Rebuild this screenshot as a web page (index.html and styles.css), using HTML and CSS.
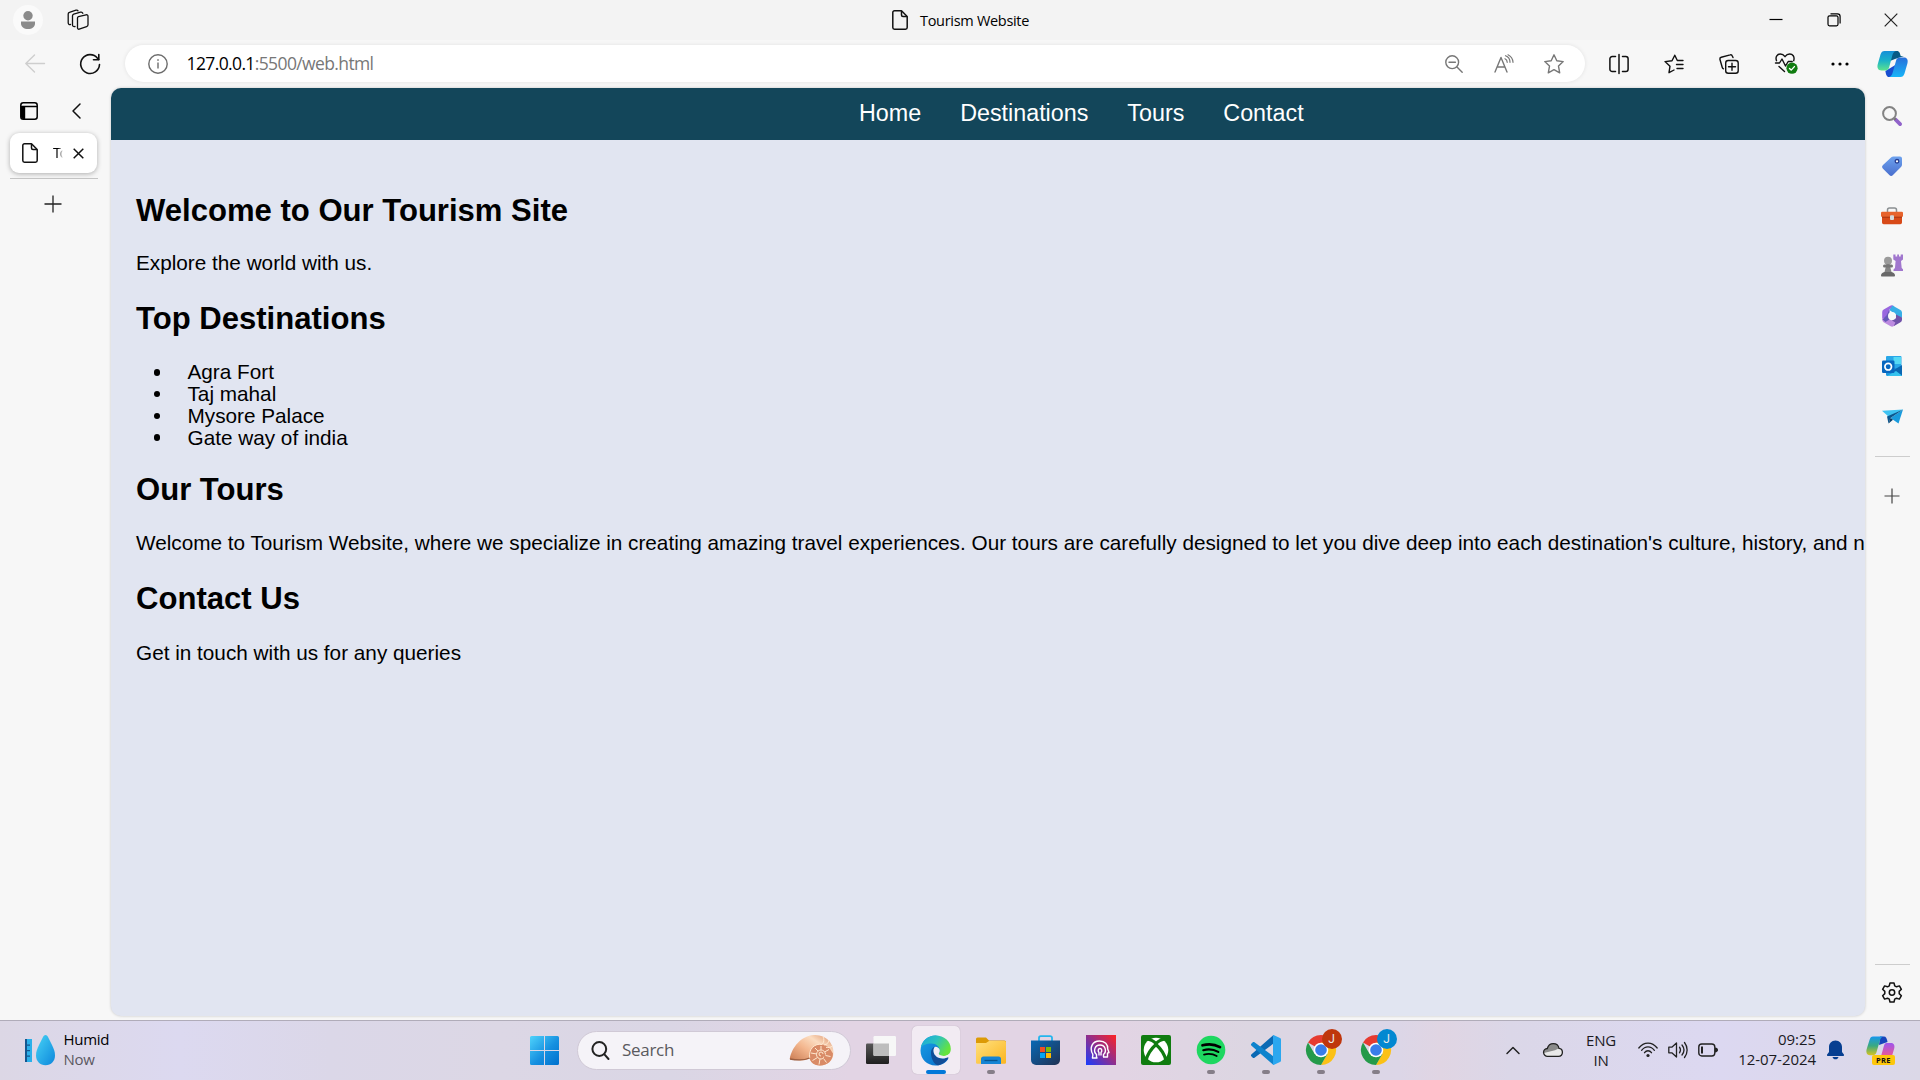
FILE: index.html
```html
<!DOCTYPE html>
<html lang="en">
<head>
<meta charset="utf-8">
<title>Tourism Website</title>
<link rel="stylesheet" href="styles.css">
</head>
<body>
<header class="titlebar">
  <div class="avatar"><svg width="16" height="18" viewBox="0 0 16 18" fill="#8b8b8b"><circle cx="8" cy="4.7" r="4.7"/><path d="M1 10.5h14v2.2c0 3-3 5.3-7 5.3s-7-2.300-7-5.300z"/></svg></div>
  <svg class="workspaces" width="22" height="22" viewBox="0 0 22 22" fill="none" stroke="#111" stroke-width="1.300" stroke-linejoin="round" stroke-linecap="round"><path d="M11.500 7.600l7.500-1.800a1.600 1.600 0 0 1 2 1.600v8.300a2 2 0 0 1-1.400 1.900l-7.400 2.600a1.300 1.300 0 0 1-1.700-1.200V9a1.500 1.500 0 0 1 1-1.400z"/><path d="M8 17.500c-1.600.3-2.500-.3-2.500-1.500V6.800c0-.8.500-1.400 1.200-1.700l6.800-1.900c1.200-.3 2 .3 2.300 1.100"/><path d="M3.500 15.500C2 15.800 1.200 15 1.200 13.800V5c0-.8.500-1.500 1.200-1.700L9 1.200c1-.3 1.700.1 2 .7"/></svg>
  <div class="window-title">
    <svg width="16" height="20" viewBox="0 0 16 20" fill="none" stroke="#111" stroke-width="1.500" stroke-linejoin="round"><path d="M2.500.8h7l5.700 5.700v11a1.700 1.700 0 0 1-1.700 1.700h-11a1.700 1.700 0 0 1-1.700-1.700v-15A1.700 1.700 0 0 1 2.500.8z"/><path d="M9.500 1v4a1.500 1.500 0 0 0 1.500 1.500h4"/></svg>
    <span>Tourism Website</span>
  </div>
  <div class="window-buttons">
    <svg width="14" height="14" viewBox="0 0 14 14"><path d="M.5 6.500h13" stroke="#000" stroke-width="1.200"/></svg>
    <svg width="14" height="14" viewBox="0 0 14 14" fill="none" stroke="#000" stroke-width="1.200"><rect x="1" y="2.800" width="10" height="10" rx="1.500"/><path d="M3.500.8h7a2.600 2.600 0 0 1 2.600 2.600v7"/></svg>
    <svg width="14" height="14" viewBox="0 0 14 14"><path d="M.7.7l12.600 12.600M13.300.7L.7 13.300" stroke="#222" stroke-width="1.200"/></svg>
  </div>
</header>

<div class="toolbar">
  <div class="nav-buttons">
    <svg width="20" height="20" viewBox="0 0 20 20" fill="none" stroke="#cecece" stroke-width="1.400" stroke-linecap="round" stroke-linejoin="round"><path d="M19.500 9.500H.8M9.500 1L.8 9.500l8.700 8.500"/></svg>
    <svg width="22" height="22" viewBox="0 0 22 22" fill="none" stroke="#111" stroke-width="1.600" stroke-linecap="round" stroke-linejoin="round"><path d="M20.500 11.500A9.400 9.400 0 1 1 18.500 5.200l1.200 1.300"/><path d="M19.800 1.500v5.300h-5.300"/></svg>
  </div>
  <div class="address">
    <svg width="20" height="20" viewBox="0 0 20 20" fill="none" stroke="#6c6c6c" stroke-width="1.400"><circle cx="10" cy="10" r="9.200"/><path d="M10 8.500v6"/><circle cx="10" cy="6" r=".5" fill="#6c6c6c" stroke-width=".8"/></svg>
    <span class="url"><b>127.0.0.1</b>:5500/web.html</span>
    <div class="address-tools">
      <svg width="18" height="18" viewBox="0 0 18 18" fill="none" stroke="#777" stroke-width="1.400" stroke-linecap="round"><circle cx="7.200" cy="7.200" r="6.400"/><path d="M12 12l5.200 5.200M4 7.200h6.400"/></svg>
      <svg width="20" height="20" viewBox="0 0 20 20" fill="none" stroke="#777" stroke-width="1.400" stroke-linecap="round" stroke-linejoin="round"><path d="M1 18L7 3.500 13 18M3.200 13h7.600"/><path d="M11.500 1.700c3 1 4.500 3.600 4.500 6.600M11 4.700c1.500.6 2.200 2 2.200 3.600M14 .8c3 1.500 4.800 4.500 5 7.500" stroke-width="1.200"/></svg>
      <svg width="20" height="20" viewBox="0 0 20 20" fill="none" stroke="#777" stroke-width="1.400" stroke-linejoin="round"><path d="M10 .8l2.800 5.900 6.400.9-4.700 4.500 1.200 6.700L10 15.600l-5.700 3.200 1.200-6.700L.8 7.600l6.400-.9z"/></svg>
    </div>
  </div>
  <div class="toolbar-actions">
    <svg width="20" height="20" viewBox="0 0 20 20" fill="none" stroke="#111" stroke-width="1.500" stroke-linecap="round"><path d="M10 .5v19M6.500 2.500H3.200a2.300 2.300 0 0 0-2.300 2.300v10.400a2.300 2.300 0 0 0 2.300 2.300h3.300M13.500 2.500h3.300a2.300 2.300 0 0 1 2.300 2.300v10.400a2.300 2.300 0 0 1-2.300 2.300h-3.300"/></svg>
    <svg width="20" height="20" viewBox="0 0 20 20" fill="none" stroke="#111" stroke-width="1.400" stroke-linecap="round" stroke-linejoin="round"><path d="M19 6.500h-5.700L10.800 1.200 8 6.700l-7 .9 5 4.600-1 6.500 5-2.700M12.500 10.500H19M13 14.500h6"/></svg>
    <svg width="20" height="20" viewBox="0 0 20 20" fill="none" stroke="#111" stroke-width="1.400" stroke-linecap="round" stroke-linejoin="round"><rect x="6.700" y="6.500" width="12.500" height="12.700" rx="2.500"/><path d="M13 9.300v7M9.500 12.800h7M14 3.500l-.7-1.500A1.700 1.700 0 0 0 11.200.9L2.200 3.200A1.800 1.800 0 0 0 .9 5.300l2.300 8c.2.700.6 1.200 1.300 1.500"/></svg>
    <svg width="24" height="24" viewBox="0 0 24 24" fill="none" stroke="#111" stroke-width="1.400" stroke-linecap="round" stroke-linejoin="round"><path d="M2.500 8.700C1 4.500 3.500 2 6.300 2c2 0 3.500 1 4.700 2.700C12.200 3 13.700 2 15.700 2c2.800 0 5.300 2.500 4 6.700M1.500 11h4L8 7l3.500 7 2.700-4.500h4M5 14.500l5.500 5"/><circle cx="18" cy="16.200" r="5.600" fill="#107c10" stroke="none"/><path d="M15.500 16.500l1.700 1.600 3.200-3.500" stroke="#fff"/></svg>
    <svg width="18" height="4" viewBox="0 0 18 4"><circle cx="2" cy="2" r="1.600"/><circle cx="9" cy="2" r="1.600"/><circle cx="16" cy="2" r="1.600"/></svg>
  </div>
  <svg class="copilot" width="31" height="28" viewBox="0 0 31 28">
    <defs>
      <linearGradient id="cpA" x1="0" y1="0" x2="0" y2="1"><stop offset="0" stop-color="#168fd8"/><stop offset=".5" stop-color="#1bb2c8"/><stop offset="1" stop-color="#5ce38e"/></linearGradient>
      <linearGradient id="cpB" x1="0" y1="0" x2="0" y2="1"><stop offset="0" stop-color="#286fda"/><stop offset="1" stop-color="#18b5f8"/></linearGradient>
    </defs>
    <path d="M15 1h5c2.500 0 3 2.500 3.700 5H27l-9 3-5 2z" fill="#075b86"/>
    <path d="M16 27h-4c-2.500 0-3-2.500-3.600-6L15 17l5-3z" fill="#174ed0"/>
    <path d="M7.500 1H19c-2 .5-3 2-3.700 4.500l-3.200 12c-.7 2.300-2 3-3.800 3H4.500C1 20.500-.2 17.600.8 14L3.500 4.500C4.300 2 5.500 1 7.500 1z" fill="url(#cpA)"/>
    <path d="M23.500 27H12c2-.5 3-2 3.700-4.500l3.400-12c.7-2.300 2-3 3.800-3h4.200c3 0 4.200 2.500 3.300 6l-2.900 10c-.8 2.500-2 3.500-4 3.500z" fill="url(#cpB)"/>
  </svg>
</div>

<main class="workspace">
  <aside class="tabs">
    <div class="tabs-head">
      <svg width="18" height="18" viewBox="0 0 18 18" fill="none" stroke="#000" stroke-width="1.500"><rect x=".8" y=".8" width="16.400" height="16.400" rx="2.500"/><path d="M.8 4.500h16.400"/><path d="M1 4.500h4.200V17H3a2 2 0 0 1-2-2z" fill="#000" stroke="none"/></svg>
      <svg width="9" height="16" viewBox="0 0 9 16" fill="none" stroke="#111" stroke-width="1.500" stroke-linecap="round" stroke-linejoin="round"><path d="M8 1L1 8l7 7"/></svg>
    </div>
    <div class="tab">
      <svg width="16" height="20" viewBox="0 0 16 20" fill="none" stroke="#111" stroke-width="1.500" stroke-linejoin="round"><path d="M2.500.8h7l5.700 5.700v11a1.700 1.700 0 0 1-1.700 1.700h-11a1.700 1.700 0 0 1-1.700-1.700v-15A1.700 1.700 0 0 1 2.500.8z"/><path d="M9.500 1v4a1.500 1.500 0 0 0 1.500 1.500h4"/></svg>
      <span class="tab-label">Tourism</span>
      <svg width="11" height="11" viewBox="0 0 11 11"><path d="M.7.7l9.600 9.600M10.300.7L.7 10.300" stroke="#111" stroke-width="1.500"/></svg>
    </div>
    <div class="tab-rule"></div>
    <svg class="new-tab" width="18" height="18" viewBox="0 0 18 18"><path d="M9 .5v17M.5 9h17" stroke="#222" stroke-width="1.300"/></svg>
  </aside>

  <section class="page">
    <nav class="site-nav"><a>Home</a><a>Destinations</a><a>Tours</a><a>Contact</a></nav>
    <div class="site-body">
      <h2>Welcome to Our Tourism Site</h2>
      <p class="intro">Explore the world with us.</p>
      <h2>Top Destinations</h2>
      <ul>
        <li>Agra Fort</li>
        <li>Taj mahal</li>
        <li>Mysore Palace</li>
        <li>Gate way of india</li>
      </ul>
      <h2>Our Tours</h2>
      <p>Welcome to Tourism Website, where we specialize in creating amazing travel experiences. Our tours are carefully designed to let you dive deep into each destination's culture, history, and nature</p>
      <h2>Contact Us</h2>
      <p>Get in touch with us for any queries</p>
    </div>
  </section>

  <aside class="rail">
    <div class="rail-item"><svg width="20" height="20" viewBox="0 0 20 20" fill="none"><path d="M13.500 13.500l4.600 4.600" stroke="#9163ca" stroke-width="3.800" stroke-linecap="round"/><path d="M11.700 11.700l2 2" stroke="#767676" stroke-width="2.200"/><circle cx="7.500" cy="7.500" r="6.400" stroke="#838383" stroke-width="2"/></svg></div>
    <div class="rail-item"><svg width="20" height="20" viewBox="0 0 20 20"><defs><linearGradient id="tag" x1="0" y1="0" x2="0" y2="1"><stop offset="0" stop-color="#6da2ee"/><stop offset="1" stop-color="#4a6fce"/></linearGradient></defs><path d="M11.500.5H18a2 2 0 0 1 2 2v6.300a3 3 0 0 1-.8 2L11 19a2.600 2.600 0 0 1-3.700 0L1 12.700A2.600 2.600 0 0 1 1 9l8.300-7.700a3 3 0 0 1 2.200-.8z" fill="url(#tag)"/><circle cx="15" cy="5.300" r="1.800" fill="#fff" stroke="#263d91" stroke-width="1.300"/></svg></div>
    <div class="rail-item"><svg width="22" height="18" viewBox="0 0 22 18"><path d="M6.500 6V3a2 2 0 0 1 2-2h5a2 2 0 0 1 2 2v3" fill="none" stroke="#8a8f91" stroke-width="1.500"/><path d="M1 9h20v6.500a1.700 1.700 0 0 1-1.700 1.700H2.700A1.700 1.700 0 0 1 1 15.500z" fill="#d84a18"/><rect y="4.800" width="22" height="5.200" rx="1.300" fill="#e7632c"/><path d="M1 9.700h20v1H1z" fill="#a83510"/><rect x="9" y="8.300" width="4" height="4.600" rx="1" fill="#d4dadd"/></svg></div>
    <div class="rail-item"><svg width="22" height="23" viewBox="0 0 22 23"><path d="M12.300.5h2.200v2h1.700v-2H18v2h1.700v-2H22v5l-2 1.500.7 7 1.300 1.200V17h-9.500v-1.500L14 14l.6-7-2.300-1.500z" fill="#a177ce"/><circle cx="7" cy="6.800" r="4" fill="#9b9b9b"/><path d="M5.500 10h3l2 8h-7z" fill="#858585"/><rect x="2" y="10.500" width="10" height="3" rx="1.500" fill="#777"/><path d="M3.500 18h7c2 .7 3.500 1.800 3.500 3.500 0 .7-.5 1-1 1H1c-.6 0-1-.3-1-1C0 19.800 1.500 18.700 3.500 18z" fill="#696969"/></svg></div>
    <div class="rail-item"><svg width="20" height="22" viewBox="0 0 20 22"><path d="M8.200.8a3 3 0 0 1 3.200 0l1 .6-5 3v7l-4 3.800L.2 13V7a3 3 0 0 1 1.500-2.600z" fill="#9967df"/><path d="M10.500.5L18 4.700A3.300 3.300 0 0 1 20 7.500v5.300l-6.200-.8V9.500L7.400 5z" fill="#37aee6"/><path d="M14 9.500l6 3v2.200a3 3 0 0 1-1.500 2.600l-6.400 3.800L7.500 17l6.500-4z" fill="#7152aa"/><path d="M.2 12.700L7.400 14l6 3.500-1.800 3.700a3 3 0 0 1-3 0l-7-4A3 3 0 0 1 .2 14.600z" fill="#bd8be0"/><path d="M7.400 4.500v10L3.500 17l-3-2.500 4-4z" fill="#6658b8"/><circle cx="10" cy="11" r="4" fill="#f8f8f8"/></svg></div>
    <div class="rail-item"><svg width="20" height="20" viewBox="0 0 20 20"><rect x="4" y="0" width="15.500" height="14" rx="1" fill="#2aa8e8"/><path d="M11.500 1H19v7h-7.500z" fill="#55d9f5"/><path d="M4 18.500V12h16v7a1 1 0 0 1-1 1H5.500A1.500 1.500 0 0 1 4 18.500z" fill="#1b96df"/><path d="M11 14.500l9-5.500v11z" fill="#0a67b3"/><path d="M5 20l9-5 6 4.500-1 .5z" fill="#35c2ee"/><rect y="4.500" width="12.500" height="12.500" rx="1.200" fill="#0867bf"/><circle cx="6.200" cy="10.700" r="3.300" fill="none" stroke="#fff" stroke-width="1.700"/></svg></div>
    <div class="rail-item"><svg width="21" height="15" viewBox="0 0 21 15"><path d="M0 1.700L21 .4 7 8z" fill="#3fc3f2"/><path d="M21 .4L16.500 14.500 8.500 9z" fill="#199bdd"/><path d="M21 .4L8.500 9l-2 5.500L5 7.500z" fill="#0b578f"/><path d="M8.500 9L6.500 14.500l4.500-3.700z" fill="#073c68"/></svg></div>
    <div class="rail-rule"></div>
    <svg class="rail-add" width="16" height="16" viewBox="0 0 16 16"><path d="M8 .5v15M.5 8h15" stroke="#444" stroke-width="1.200"/></svg>
    <div class="rail-foot">
      <div class="rail-rule"></div>
      <svg width="22" height="22" viewBox="0 0 22 22" fill="none" stroke="#111" stroke-width="1.500" stroke-linejoin="round"><path d="M9 .9h4l.7 2.900 1.800 1 2.900-.9 2 3.400-2.200 2.100v2.200l2.200 2.100-2 3.400-2.900-.9-1.800 1-.7 2.900H9l-.7-2.900-1.800-1-2.900.9-2-3.400 2.200-2.100V9.400L1.600 7.300l2-3.400 2.900.9 1.800-1z"/><circle cx="11" cy="10.500" r="2.700"/></svg>
    </div>
  </aside>
</main>

<footer class="taskbar">
  <div class="weather">
    <svg width="31" height="32" viewBox="0 0 31 32"><defs><linearGradient id="drop" x1="0" y1="0" x2="1" y2="1"><stop offset="0" stop-color="#47d3f5"/><stop offset="1" stop-color="#0d87dc"/></linearGradient></defs><path d="M0 5h7v23H0z" fill="#2bb0ea"/><path d="M0 5h2v23H0zM2 10.500h3v1.200H2zM2 16h3v1.200H2zM2 21.500h3v1.200H2z" fill="#14578f"/><path d="M20.500 1c1.300 0 2 1 2.500 2l4 8c1.800 3.700 3 6.500 3 10.500 0 5.700-4 9.700-9.500 9.700S11 27.200 11 21.500c0-4 1.200-6.800 3-10.500l4-8c.5-1 1.200-2 2.500-2z" fill="url(#drop)"/></svg>
    <div class="weather-text"><span>Humid</span><span class="dim">Now</span></div>
  </div>
  <div class="apps">
    <svg class="start" width="29" height="29" viewBox="0 0 29 29"><defs><linearGradient id="win" x1="0" y1="0" x2="1" y2="1"><stop offset="0" stop-color="#4fd3fb"/><stop offset=".55" stop-color="#1690e0"/><stop offset="1" stop-color="#0070cd"/></linearGradient></defs><path d="M1.500 0H14v14H0V1.500A1.500 1.500 0 0 1 1.500 0zM15 0h12.500A1.500 1.500 0 0 1 29 1.500V14H15zM0 15h14v14H1.500A1.500 1.500 0 0 1 0 27.500zM15 15h14v12.500a1.500 1.500 0 0 1-1.500 1.500H15z" fill="url(#win)"/></svg>
    <div class="search">
      <svg width="19" height="19" viewBox="0 0 19 19" fill="none" stroke="#222" stroke-width="2" stroke-linecap="round"><circle cx="8.300" cy="8" r="6.900"/><path d="M13.200 13.200L17.500 18"/></svg>
      <span>Search</span>
      <svg class="shell" width="45" height="32" viewBox="0 0 45 32"><defs><linearGradient id="shell" x1="0" y1="1" x2="1" y2="0"><stop offset="0" stop-color="#c06d44"/><stop offset=".45" stop-color="#f3b68e"/><stop offset=".7" stop-color="#fbdcc0"/><stop offset="1" stop-color="#d98a62"/></linearGradient></defs><path d="M.7 25C3 13 12 2 25 1c12-.7 19.500 8 19.500 17.500C44.500 26 39 31.500 31 31.500c-5.500 0-9.500-3-10-7-5 2.500-12 2.500-20.300.5z" fill="url(#shell)"/><path d="M20.500 24c-2-8 4.500-14.500 12.500-13.500 7 1 9 6 11 9 0 7-5.500 12-13 12-5.500 0-9.500-3-10.500-7.500z" fill="#d98b67"/><g fill="none" stroke="#ffe8cf" stroke-width="1"><path d="M20.700 24c-1.500-9 5-15 12.300-13.500M34 2.500c1.500 3 1 6-1 8M40 6c-.5 3-2 4.500-5 5M43.500 12c-2 1.500-4 2-6.500 1.300M32 16V12M35.500 18l4.500-2.500M36.500 21.500l5 1M34.500 24.500l3 4M31 25l-1 5.500M28.500 23.500l-5 3M27.700 20L22 19M29 17L26 14M36.500 20.500a4.500 4.500 0 1 0-4.500 4.500c1.600 0 2.500-.8 2.700-2.300M32 22a2 2 0 1 1 2-2"/></g><path d="M1 25c8 1.500 15 1 19.500-1" fill="none" stroke="#9c6042" stroke-width="1.300"/></svg>
    </div>
    <div class="app"><svg width="30" height="28" viewBox="0 0 30 28"><defs><linearGradient id="tvB" x1="0" y1="0" x2="0" y2="1"><stop offset="0" stop-color="#575757"/><stop offset="1" stop-color="#1f1f1f"/></linearGradient></defs><rect y="7.500" width="23" height="20.500" rx="1.200" fill="url(#tvB)"/><rect x="7.500" y="0" width="22.500" height="20" rx="1.200" fill="#f7f7f7"/><path d="M7.500 7.500H23V20H8.700a1.200 1.200 0 0 1-1.200-1.200z" fill="#bdbdbd"/></svg></div>
    <div class="app active"><svg width="31" height="31" viewBox="0 0 31 31"><defs><linearGradient id="edT" x1="0" y1="0" x2="1" y2=".5"><stop offset="0" stop-color="#1ba5dc"/><stop offset=".5" stop-color="#2bc1c0"/><stop offset="1" stop-color="#66e43c"/></linearGradient><linearGradient id="edL" x1="0" y1="0" x2="1" y2="1"><stop offset="0" stop-color="#1aa0e6"/><stop offset="1" stop-color="#0669c8"/></linearGradient></defs><path d="M.8 13C2 5.500 8 .5 15.500.5c8 0 9 9 5.500 14l-1.500 6 9 3C26 28 21 30.500 15.500 30.500 7 30.500.5 24 .5 15.500z" fill="url(#edL)"/><path d="M.8 13C2 5.500 8 .5 15.500.5 24 .5 30.800 6 30.800 14c0 4.500-3 7-7 7-3 0-5-1-5-2.200 0-.8 1-1.300 1-3.300 0-3.500-3.500-7-8.500-7C6.500 8.500 2 10 .8 13z" fill="url(#edT)"/><path d="M11 18c0-3.500 2-6 4-6.200-1 1-1.700 2.500-1.500 4.500.5 5 5.500 7.500 9.500 7.200 3-.3 4.700-1.500 5.300-1.200.6.400-3 6-9.300 8C15 31 11 24.500 11 18z" fill="#124d97"/><path d="M15 11.700c3 0 4.800 1.800 4.800 3.800s-1 2.500-1 3.300c0 1.200 2 2.200 5 2.200 2.500 0 4.500-1 5.800-2.500-.7 3.500-3.600 5-6.600 5-4 .3-9-2.200-9.500-7.200-.2-2 .5-3.600 1.500-4.600z" fill="#f3edf5"/></svg></div>
    <div class="app running"><svg width="30" height="27" viewBox="0 0 30 27"><defs><linearGradient id="fold" x1="0" y1="0" x2="1" y2="1"><stop offset="0" stop-color="#ffe07e"/><stop offset="1" stop-color="#fbb51e"/></linearGradient></defs><path d="M0 2a1.500 1.500 0 0 1 1.500-1.500H10L13 3.500h15.500A1.500 1.500 0 0 1 30 5v5H0z" fill="#dc9a05"/><path d="M0 6h10l3-2h15.500A1.500 1.500 0 0 1 30 5.500v20a1.300 1.300 0 0 1-1.300 1.300H1.300A1.300 1.300 0 0 1 0 25.500z" fill="url(#fold)"/><path d="M5 27v-5a2.500 2.500 0 0 1 2.500-2.500h15A2.500 2.500 0 0 1 25 22v5z" fill="#1584d4"/><path d="M8.500 23.500h13" stroke="#07558e" stroke-width="1.300"/></svg></div>
    <div class="app"><svg width="29" height="30" viewBox="0 0 29 30"><defs><linearGradient id="store" x1="0" y1="0" x2="1" y2="1"><stop offset="0" stop-color="#0869b5"/><stop offset="1" stop-color="#213253"/></linearGradient></defs><path d="M8 7V3a1.800 1.800 0 0 1 1.800-1.800h9.400A1.800 1.800 0 0 1 21 3v4" fill="none" stroke="#25b5ed" stroke-width="1.800"/><path d="M0 5.500h29V25a5 5 0 0 1-5 5H5a5 5 0 0 1-5-5z" fill="url(#store)"/><path d="M9 12h5v5H9z" fill="#f04f23"/><path d="M15 12h5v5h-5z" fill="#80ba02"/><path d="M9 18h5v5H9z" fill="#02a5f1"/><path d="M15 18h5v5h-5z" fill="#ffb902"/></svg></div>
    <div class="app"><svg width="30" height="30" viewBox="0 0 30 30"><defs><linearGradient id="iris" x1="0" y1="1" x2="1" y2="0"><stop offset="0" stop-color="#173dff"/><stop offset=".45" stop-color="#833099"/><stop offset="1" stop-color="#ff2222"/></linearGradient></defs><path d="M0 0h30v30H0z" fill="url(#iris)"/><g fill="none" stroke="#fff" stroke-width="1.400" stroke-linejoin="round"><path d="M11.500 23H6.500c-.3-1.500.8-2 .2-4C3 12.500 6.500 6 13.500 6c5.500 0 8.500 3.500 8.200 8l1.300 3.500-1.500.7V22H17"/><path d="M10.500 23v-3.500c-3.500-3-2-9.500 3.500-9.500s7 6.500 3.500 9.500V22"/><path d="M13 20.500v-3c-1.500-1.500-.8-4 1-4s2.500 2.500 1 4v3"/></g></svg></div>
    <div class="app"><svg width="30" height="30" viewBox="0 0 30 30"><rect width="30" height="30" rx="2" fill="#107c10"/><circle cx="15" cy="15" r="12.300" fill="#fff"/><g fill="none" stroke="#107c10" stroke-linecap="round"><path d="M8 4.500c3 .2 5 2 7 3.800 2-1.800 4-3.600 7-3.800" stroke-width="3"/><path d="M5 25.500C6.500 19 10.500 13.500 15 9.500c4.500 4 8.500 9.500 10 16" stroke-width="3.200"/></g></svg></div>
    <div class="app running"><svg width="30" height="30" viewBox="0 0 30 30"><circle cx="15" cy="15" r="14.300" fill="#1ed760"/><g fill="none" stroke="#000" stroke-linecap="round"><path d="M6.500 10.300c6-1.700 12.500-1 17.500 1.800" stroke-width="2.700"/><path d="M7.300 15.200c5.200-1.500 10.500-.8 15 1.700" stroke-width="2.200"/><path d="M8 19.600c4.500-1.200 9-.7 12.700 1.500" stroke-width="1.800"/></g></svg></div>
    <div class="app running"><svg width="30" height="30" viewBox="0 0 30 30"><path d="M22.500 0v8.500L3.500 22.800c-.5.400-1.200.3-1.700-.1L.3 21.300c-.5-.5-.5-1.200 0-1.700z" fill="#0a69b4"/><path d="M22.500 30v-8.500L3.500 7.200c-.5-.4-1.200-.3-1.700.1L.3 8.700c-.5.500-.5 1.200 0 1.700z" fill="#0d83cd"/><path d="M22.500 0L29 3c.6.300 1 .8 1 1.500v21c0 .7-.4 1.200-1 1.500l-6.500 3c-1 0-.5-2-.5-3V3c0-1-.5-3 .5-3z" fill="#2ba7ef"/></svg></div>
    <div class="app running chrome"><svg width="30" height="30" viewBox="0 0 30 30"><path d="M15 15L2 7.500A15 15 0 0 1 28 7.500L22 10z" fill="#e63b30"/><path d="M15 7.500h13A15 15 0 0 1 15 30l6.500-11.200z" fill="#fbc116"/><path d="M2 7.500A15 15 0 0 0 15 30l6.500-11.200-13 0z" fill="#249a4a"/><circle cx="15" cy="15" r="7.300" fill="#fff"/><circle cx="15" cy="15" r="5.800" fill="#397de9"/></svg><span class="badge red">J</span></div>
    <div class="app running chrome"><svg width="30" height="30" viewBox="0 0 30 30"><path d="M15 15L2 7.500A15 15 0 0 1 28 7.500L22 10z" fill="#e63b30"/><path d="M15 7.500h13A15 15 0 0 1 15 30l6.500-11.200z" fill="#fbc116"/><path d="M2 7.500A15 15 0 0 0 15 30l6.500-11.200-13 0z" fill="#249a4a"/><circle cx="15" cy="15" r="7.300" fill="#fff"/><circle cx="15" cy="15" r="5.800" fill="#397de9"/></svg><span class="badge blue">J</span></div>
  </div>
  <div class="tray">
    <svg class="tray-up" width="14" height="9" viewBox="0 0 14 9" fill="none" stroke="#222" stroke-width="1.500" stroke-linecap="round" stroke-linejoin="round"><path d="M1 7.500L7 1.500l6 6"/></svg>
    <svg class="cloud" width="20" height="14" viewBox="0 0 20 14"><path d="M4.600 13.300a3.900 3.900 0 0 1-.3-7.800C5.200 2.500 7.500.7 10.300.7c3 0 5.200 2 5.700 4.600 2 .2 3.400 1.800 3.400 3.900 0 2.400-1.700 4.100-4 4.100z" fill="#e9e9e9"/><path d="M.8 10C.5 7.500 2 5.700 4.300 5.500 5.200 2.500 7.500.7 10.300.7c3 0 5.200 2 5.700 4.600l-4 1.900z" fill="#8b8b8b"/><path d="M4.600 13.300a3.900 3.900 0 0 1-.3-7.800C5.200 2.500 7.500.7 10.300.7c3 0 5.200 2 5.700 4.600 2 .2 3.400 1.800 3.400 3.900 0 2.400-1.700 4.100-4 4.100z" fill="none" stroke="#222" stroke-width="1.300"/></svg>
    <div class="lang"><span>ENG</span><span>IN</span></div>
    <div class="status">
      <svg width="20" height="16" viewBox="0 0 20 16" fill="none" stroke="#222" stroke-width="1.300" stroke-linecap="round"><path d="M.8 6C5.700-.6 14.300-.6 19.200 6M3.600 8.300c3.500-4.700 9.300-4.700 12.800 0M6.500 10.700c1.900-2.600 5.100-2.600 7 0"/><circle cx="10" cy="13.500" r="1.600" fill="#222" stroke="none"/></svg>
      <svg width="20" height="18" viewBox="0 0 20 18" fill="none" stroke="#222" stroke-width="1.300" stroke-linecap="round" stroke-linejoin="round"><path d="M.8 6.200h3L8.500 2v14l-4.700-4.200h-3z"/><path d="M11.500 6.200c1.200 1.700 1.200 3.900 0 5.600M14 4c2.400 3 2.400 7 0 10M16.500 1.500c3.500 4.500 3.500 10.500 0 15"/></svg>
      <svg width="20" height="14" viewBox="0 0 20 14"><rect x=".8" y="1" width="16" height="12" rx="3" fill="none" stroke="#222" stroke-width="1.400"/><rect x="3" y="3.500" width="2" height="7" fill="#222"/><path d="M17 4.500c2 .3 3 1.200 3 2.500s-1 2.200-3 2.500z" fill="#222"/></svg>
    </div>
    <div class="clock"><span>09:25</span><span>12-07-2024</span></div>
    <svg class="bell" width="17" height="20" viewBox="0 0 17 20" fill="#073f91"><path d="M8.500.5c4 0 6.500 3 6.500 6.500v5l1.900 2.500c.3.800 0 1.500-.9 1.500H1c-.9 0-1.200-.7-.9-1.500L2 12V7C2 3.500 4.500.5 8.500.5zM5.500 17h6c-.5 1.500-1.500 2.300-3 2.300s-2.500-.8-3-2.300z"/></svg>
    <div class="copilot-pre">
      <svg width="29" height="26" viewBox="0 0 29 26"><defs><linearGradient id="prA" x1="0" y1="0" x2="0" y2="1"><stop offset="0" stop-color="#1697ed"/><stop offset=".5" stop-color="#3aa981"/><stop offset="1" stop-color="#d5c420"/></linearGradient><linearGradient id="prB" x1="0" y1="0" x2="0" y2="1"><stop offset="0" stop-color="#9e55ed"/><stop offset="1" stop-color="#ff5a7e"/></linearGradient></defs><path d="M14 .5h4c2 0 3 2 3.500 5.500L13 9z" fill="#1745bb"/><path d="M7 .5h10c-2 1-2.700 2.500-3.400 5l-3.200 11c-.7 2-1.700 2.700-3.500 2.700H4C1 19.200-.3 16.500.7 13L3.500 4C4.200 1.500 5.300.5 7 .5z" fill="url(#prA)"/><path d="M20.500 7H25c3 0 4 2.500 3.200 5.500L26 20c-.8 2.500-1.700 3.500-3.700 3.500H12c2-.7 2.600-2 3.300-4.300l2.500-9C18.500 8 19 7 20.500 7z" fill="url(#prB)"/></svg>
      <span class="pre">PRE</span>
    </div>
  </div>
</footer>
</body>
</html>
```
FILE: styles.css
```css
* { box-sizing: border-box; }
svg { display: block; flex: none; overflow: visible; }

body {
  margin: 0;
  width: 1920px;
  height: 1080px;
  overflow: hidden;
  display: grid;
  grid-template-rows: 40px 48px 932px 60px;
  background: #f7f7f7;
  color: #000;
  font-family: "Open Sans", "Noto Sans", sans-serif;
}

/* window title */
.titlebar { display: flex; align-items: center; background: #f3f3f3; padding: 0 22px 0 13px; }
.avatar { width: 30px; height: 30px; border-radius: 50%; background: #fafafa; display: grid; place-items: center; }
.workspaces { margin-left: 23.500px; }
.window-title { display: flex; align-items: center; gap: 12px; margin-left: 803.500px; font-size: 14.500px; letter-spacing: -.3px; white-space: nowrap; }
.window-buttons { display: flex; gap: 43.500px; margin-left: auto; }

/* toolbar */
.toolbar { display: flex; align-items: center; padding: 0 12px 1px 25px; }
.nav-buttons { display: flex; align-items: center; gap: 34px; }
.address {
  display: flex; align-items: center;
  width: 1460px; height: 37px; margin-left: 24px; padding: 0 21px 0 22.500px;
  background: #fff; border-radius: 19px;
  box-shadow: 0 0 4px rgba(0, 0, 0, .09);
}
.url { margin-left: 19px; padding-bottom: 1px; font-size: 17.500px; letter-spacing: -.62px; color: #777; line-height: 24px; white-space: nowrap; }
.url b { font-weight: 400; color: #000; }
.address-tools { display: flex; align-items: center; gap: 30.500px; margin-left: auto; }
.toolbar-actions { display: flex; align-items: center; margin-left: 24px; gap: 35px; }
.toolbar-actions svg:nth-child(4) { margin-right: -2px; }
.copilot { margin-left: auto; }

/* main row */
.workspace { display: grid; grid-template-columns: 111px 1754px 55px; }
.tabs { padding: 13px 13px 0 10px; }
.tabs-head { display: flex; align-items: center; justify-content: space-between; padding: 0 17px 0 10px; height: 19px; }
.tab { display: flex; align-items: center; width: 87px; height: 40px; margin-top: 13px; padding-left: 12px; background: #fff; border-radius: 9px; box-shadow: 0 1px 5px rgba(0, 0, 0, .3); }
.tab-label { width: 10px; margin: 0 10px 0 15px; overflow: hidden; font-size: 14.500px; line-height: 20px; letter-spacing: -1.500px; -webkit-mask-image: linear-gradient(90deg, #000 50%, transparent); mask-image: linear-gradient(90deg, #000 50%, transparent); }
.tab-rule { height: 1px; margin-top: 5px; background: #c4c4c4; }
.new-tab { margin: 16px 0 0 34px; }

/* displayed web page */
.page { height: 928px; background: #e1e5f1; border-radius: 10px; overflow: hidden; box-shadow: 0 0 3px rgba(0, 0, 0, .2); font-family: "Liberation Sans", Arial, sans-serif; }
.site-nav { display: flex; gap: 39px; height: 52px; padding-left: 748px; background: #13465a; color: #fff; font-size: 23.300px; line-height: 51px; }
.site-body { padding: 54px 0 0 25px; white-space: nowrap; font-size: 20.740px; line-height: 22px; }
.site-body h2 { margin: 0 0 25.400px; font-size: 31.070px; line-height: 34px; }
.site-body p { margin: 0 0 28.200px; }
.site-body .intro { margin: -1.900px 0 28.500px; }
.site-body ul { margin: 0 0 24.200px; padding: 0; list-style: none; line-height: 21.750px; }
.site-body li { display: flex; align-items: center; gap: 27.500px; padding-left: 17.500px; }
.site-body li::before { content: ""; width: 6.500px; height: 6.500px; border-radius: 50%; background: #000; }

/* right rail */
.rail { display: flex; flex-direction: column; align-items: center; padding: 2.500px 1px 0 0; }
.rail-item { height: 50.100px; display: grid; place-items: center; }
.rail-rule { width: 35px; height: 1px; background: #cdcdcd; }
.rail-item + .rail-rule { margin-top: 14.500px; }
.rail-add { margin-top: 31px; }
.rail-foot { margin-top: auto; padding-bottom: 16px; display: flex; flex-direction: column; align-items: center; gap: 17px; }

/* taskbar */
.taskbar {
  display: flex; align-items: center;
  padding-bottom: 1px;
  border-top: 1px solid #b0acb9;
  background: linear-gradient(90deg, #dcd7e5 0, #dcd9f0 180px, #dbd7e8 330px, #dcd7e5 500px, #dad6e5 670px, #e2d4e4 850px, #e2d4e4 1120px, #dcd6e2 1250px, #dcd6e7 1400px, #e0d5e3 1440px, #dbd7e8 1510px, #dcd8f1 1720px, #dbd8e7 1920px);
}
.weather { display: flex; align-items: center; gap: 7.500px; width: 530px; padding-left: 25px; font-size: 15px; letter-spacing: -.3px; line-height: 20px; }
.weather-text, .lang, .clock { display: flex; flex-direction: column; }
.weather-text, .clock { padding-bottom: 3px; }
.dim { color: #5b5961; }
.apps { display: flex; align-items: center; }
.search { display: flex; align-items: center; width: 274px; height: 39px; margin: 0 3px 0 17.500px; padding: 0 16px 0 13.500px; background: #f5f3f8; border: 1px solid #d0c9d6; border-radius: 20px; font-size: 17px; letter-spacing: -.3px; color: #5a5a5e; }
.search span { margin-left: 12px; line-height: 24px; }
.shell { margin-left: auto; }
.app { position: relative; width: 48px; height: 48px; margin-left: 7px; display: grid; place-items: center; border-radius: 5px; }
.search + .app { margin-left: 3px; }
.active { background: #f2ebf3; box-shadow: 0 0 1px rgba(0, 0, 0, .25); }
.active::after, .running::after { content: ""; position: absolute; bottom: 0; left: 20px; width: 8px; height: 4px; border-radius: 2px; background: #857e88; }
.active::after { left: 14px; width: 20px; background: #0078d9; }
.badge { position: absolute; top: 3px; right: 3px; width: 20px; height: 20px; border-radius: 50%; color: #e9e9e9; font-family: Roboto, sans-serif; font-size: 12px; line-height: 20px; text-align: center; }
.red { background: #bf360c; }
.blue { background: #0288d1; }

.tray { display: flex; align-items: center; margin-left: auto; padding-right: 25px; font-size: 15px; line-height: 20px; color: #1b1b1f; }
.cloud { margin-left: 23px; }
.lang { width: 40px; margin-left: 18px; align-items: center; letter-spacing: -.2px; padding-bottom: 1px; }
.status { display: flex; align-items: center; gap: 10px; margin-left: 17px; }
.clock { width: 90px; margin-left: 8px; align-items: flex-end; white-space: nowrap; letter-spacing: -.05px; }
.bell { margin-left: 10.500px; }
.copilot-pre { position: relative; width: 29px; height: 28px; margin-left: 22.500px; }
.pre { position: absolute; left: 6px; bottom: -1px; width: 23px; height: 10px; border-radius: 2px; background: #fdc70b; color: #111; font-size: 7.500px; font-weight: 700; line-height: 10px; letter-spacing: .3px; text-align: center; }
```
